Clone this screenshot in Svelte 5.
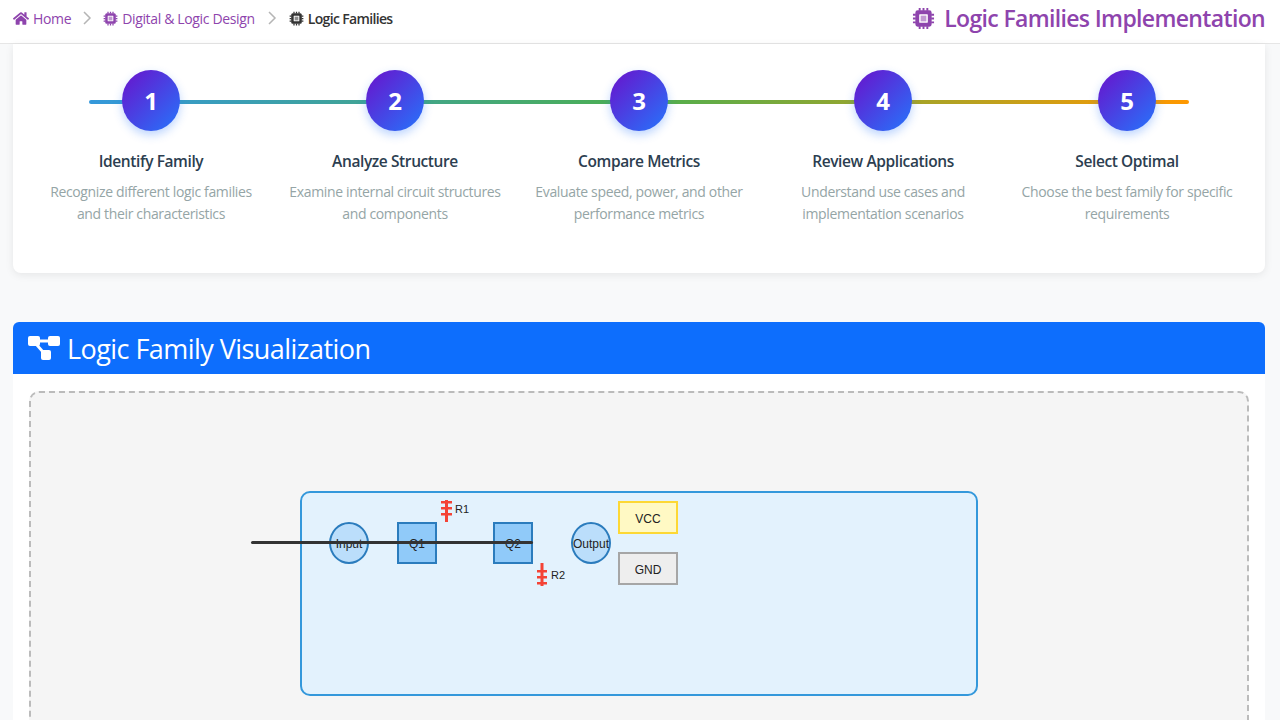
<script lang="ts">
  const steps = [
    { title: "Identify Family", text: "Recognize different logic families and their characteristics" },
    { title: "Analyze Structure", text: "Examine internal circuit structures and components" },
    { title: "Compare Metrics", text: "Evaluate speed, power, and other performance metrics" },
    { title: "Review Applications", text: "Understand use cases and implementation scenarios" },
    { title: "Select Optimal", text: "Choose the best family for specific requirements" }
  ];
</script>

{#snippet chip(size)}
  <svg class="icon" width={size} height={size} viewBox="0 0 24 24" fill="currentColor">
    <path d="M7 1h2v3H7zM11 1h2v3h-2zM15 1h2v3h-2zM7 20h2v3H7zM11 20h2v3h-2zM15 20h2v3h-2zM1 7h3v2H1zM1 11h3v2H1zM1 15h3v2H1zM20 7h3v2h-3zM20 11h3v2h-3zM20 15h3v2h-3z" />
    <path fill-rule="evenodd" d="M6 3.5h12A2.5 2.5 0 0 1 20.5 6v12a2.5 2.5 0 0 1-2.500 2.500H6A2.500 2.500 0 0 1 3.500 18V6A2.500 2.500 0 0 1 6 3.500zM8 7.500a.5.5 0 0 0-.5.5v8a.5.5 0 0 0 .5.5h8a.5.5 0 0 0 .5-.5V8a.5.5 0 0 0-.5-.5z" />
    <rect x="9" y="9" width="6" height="6" opacity="0.55" />
  </svg>
{/snippet}

<header class="topbar">
  <nav class="crumbs">
    <a class="crumb" href="#home">
      <svg class="icon" width="16" height="15" viewBox="0 0 576 512" fill="currentColor">
        <path d="M280.37 148.26L96 300.11V464a16 16 0 0 0 16 16l112.06-.29a16 16 0 0 0 15.92-16V368a16 16 0 0 1 16-16h64a16 16 0 0 1 16 16v95.64a16 16 0 0 0 16 16.05L464 480a16 16 0 0 0 16-16V300L295.67 148.26a12.19 12.19 0 0 0-15.3 0zM571.6 251.47L488 182.56V44.05a12 12 0 0 0-12-12h-56a12 12 0 0 0-12 12v72.61L318.47 43a48 48 0 0 0-61 0L4.34 251.47a12 12 0 0 0-1.6 16.9l25.5 31A12 12 0 0 0 45.15 301l235.22-193.74a12.19 12.19 0 0 1 15.3 0L530.9 301a12 12 0 0 0 16.9-1.6l25.5-31a12 12 0 0 0-1.7-16.93z" />
      </svg>
      Home
    </a>
    <svg class="sep" width="10" height="16" viewBox="0 0 10 16"><path d="M2 2l6 6-6 6" fill="none" stroke="#b5b5b5" stroke-width="1.500" /></svg>
    <a class="crumb mid" href="#digital">{@render chip(15)} Digital &amp; Logic Design</a>
    <svg class="sep" width="10" height="16" viewBox="0 0 10 16"><path d="M2 2l6 6-6 6" fill="none" stroke="#b5b5b5" stroke-width="1.500" /></svg>
    <span class="crumb current">{@render chip(15)} Logic Families</span>
  </nav>
  <h1 class="page-title">{@render chip(23)} Logic Families Implementation</h1>
</header>

<main class="page">
  <section class="process-card">
    <div class="process">
      <div class="line"></div>
      {#each steps as step, i}
        <div class="step">
          <div class="num">{i + 1}</div>
          <h3>{step.title}</h3>
          <p>{step.text}</p>
        </div>
      {/each}
    </div>
  </section>

  <section class="viz-card">
    <h2 class="viz-head">
      <svg class="icon" width="32" height="25" viewBox="0 0 32 25" fill="#fff">
        <rect x="0" y="0" width="12" height="10" rx="2" />
        <rect x="20" y="0" width="12" height="10" rx="2" />
        <rect x="13" y="14" width="10" height="10" rx="2" />
        <rect x="10" y="3.500" width="12" height="3" />
        <path d="M7 9l2.500-1.500 7 8-2.500 1.500z" />
      </svg>
      Logic Family Visualization
    </h2>
    <div class="viz-body">
      <div class="canvas">
        <div class="circuit"></div>
        <div class="node round" style="left:298px;top:129px">Input</div>
        <div class="node square" style="left:366px;top:129px">Q1</div>
        <div class="node square" style="left:462px;top:129px">Q2</div>
        <div class="node round" style="left:540px;top:129px">Output</div>
        <div class="rail vcc">VCC</div>
        <div class="rail gnd">GND</div>
        <div class="wire"></div>
        <div class="res r1">
          <svg width="11" height="22" viewBox="0 0 11 22" fill="#f44336"><rect x="4" y="0" width="3" height="22" /><rect x="0" y="1" width="11" height="2.500" /><rect x="0" y="7" width="11" height="2.500" /><rect x="0" y="13" width="11" height="2.500" /></svg>
          <span>R1</span>
        </div>
        <div class="res r2">
          <svg width="10" height="23" viewBox="0 0 10 23" fill="#f44336"><rect x="3.500" y="0" width="3" height="23" /><rect x="0" y="7" width="10" height="2.500" /><rect x="0" y="13" width="10" height="2.500" /><rect x="0" y="19" width="10" height="2.500" /></svg>
          <span>R2</span>
        </div>
      </div>
    </div>
  </section>
</main>

<style>
  :global(body) {
    margin: 0;
    background: #f8f9fa;
    font-family: "Open Sans", "Noto Sans", sans-serif;
    overflow: hidden;
  }

  .icon {
    flex: none;
  }

  .topbar {
    height: 44px;
    box-sizing: border-box;
    padding: 0 15px 7px 13px;
    background: #fff;
    border-bottom: 1px solid #e6e6e6;
    display: flex;
    align-items: center;
    justify-content: space-between;
  }

  .crumbs {
    display: flex;
    align-items: center;
    gap: 11px;
    font-size: 14px;
    letter-spacing: -0.35px;
  }

  .crumb {
    display: flex;
    align-items: center;
    gap: 4px;
    color: #8e44ad;
    text-decoration: none;
  }

  .crumb.mid {
    margin-right: 1px;
  }

  .crumb.current {
    margin-left: 1px;
    color: #333;
    font-weight: 600;
    letter-spacing: -0.65px;
  }

  .page-title {
    display: flex;
    align-items: center;
    gap: 9px;
    margin: 0;
    font-size: 23px;
    font-weight: 600;
    color: #8e44ad;
    letter-spacing: -0.65px;
  }

  .page {
    padding: 0 15px 0 13px;
  }

  .process-card {
    background: #fff;
    border-radius: 0 0 8px 8px;
    box-shadow: 0 2px 8px rgba(0, 0, 0, 0.08);
    height: 229px;
    padding: 26px 16px 0;
    box-sizing: border-box;
  }

  .process {
    position: relative;
    display: grid;
    grid-template-columns: repeat(5, 1fr);
  }

  .line {
    position: absolute;
    left: 60px;
    right: 60px;
    top: 30px;
    height: 3.500px;
    border-radius: 2px;
    background: linear-gradient(90deg, #3498db, #4caf50 50%, #ff9800);
  }

  .step {
    position: relative;
    display: flex;
    flex-direction: column;
    align-items: center;
    text-align: center;
  }

  .num {
    width: 58px;
    height: 61px;
    border-radius: 50%;
    background: linear-gradient(135deg, #6a11cb, #2575fc);
    box-shadow: 0 4px 10px rgba(37, 117, 252, 0.3);
    color: #fff;
    font-size: 24px;
    font-weight: 700;
    display: flex;
    align-items: center;
    justify-content: center;
  }

  .step h3 {
    margin: 19px 0 9px;
    font-size: 15.500px;
    line-height: 22px;
    font-weight: 600;
    letter-spacing: -0.4px;
    color: #2c3e50;
  }

  .step p {
    margin: 0;
    width: 220px;
    font-size: 14px;
    line-height: 22px;
    letter-spacing: -0.35px;
    color: #95a5a6;
  }

  .viz-card {
    margin-top: 49px;
    background: #fff;
    border-radius: 6px 6px 0 0;
    height: 398px;
    overflow: hidden;
  }

  .viz-head {
    margin: 0;
    height: 52px;
    padding: 0 15px;
    background: #0d6efd;
    color: #fff;
    display: flex;
    align-items: center;
    gap: 7px;
    font-size: 27px;
    font-weight: 400;
    letter-spacing: -0.55px;
  }

  .viz-body {
    padding: 17px 16px 0;
  }

  .canvas {
    position: relative;
    height: 400px;
    box-sizing: border-box;
    background: #f5f5f5;
    border: 2px dashed #bbb;
    border-radius: 10px;
  }

  .canvas > * {
    position: absolute;
  }

  .circuit {
    left: 269px;
    top: 98px;
    width: 678px;
    height: 205px;
    box-sizing: border-box;
    background: #e3f2fd;
    border: 2px solid #3498db;
    border-radius: 10px;
  }

  .node {
    width: 40px;
    height: 42px;
    box-sizing: border-box;
    padding-top: 2px;
    border: 2px solid #2b7cbd;
    font-family: "Liberation Sans", Arial, sans-serif;
    font-size: 12px;
    color: #222;
    display: flex;
    align-items: center;
    justify-content: center;
    white-space: nowrap;
  }

  .round {
    background: #bbdefb;
    border-radius: 50%;
  }

  .square {
    background: #90caf9;
  }

  .rail {
    width: 60px;
    height: 33px;
    box-sizing: border-box;
    padding-top: 2px;
    font-family: "Liberation Sans", Arial, sans-serif;
    font-size: 12px;
    color: #222;
    display: flex;
    align-items: center;
    justify-content: center;
  }

  .vcc {
    left: 587px;
    top: 108px;
    background: #fff9c4;
    border: 2px solid #fdd835;
  }

  .gnd {
    left: 587px;
    top: 159px;
    background: #eee;
    border: 2px solid #a6a6a6;
  }

  .wire {
    left: 220px;
    top: 148px;
    width: 282px;
    height: 3px;
    border-radius: 2px;
    background: #333;
  }

  .res {
    display: flex;
    align-items: flex-start;
    gap: 3px;
    font-family: "Liberation Sans", Arial, sans-serif;
    font-size: 11px;
    line-height: 13px;
    color: #222;
  }

  .res span {
    margin-top: 3px;
  }

  .r1 {
    left: 410px;
    top: 107px;
  }

  .r2 {
    left: 506px;
    top: 170px;
  }

  .r2 span {
    margin-top: 6px;
    margin-left: 1px;
  }
</style>
